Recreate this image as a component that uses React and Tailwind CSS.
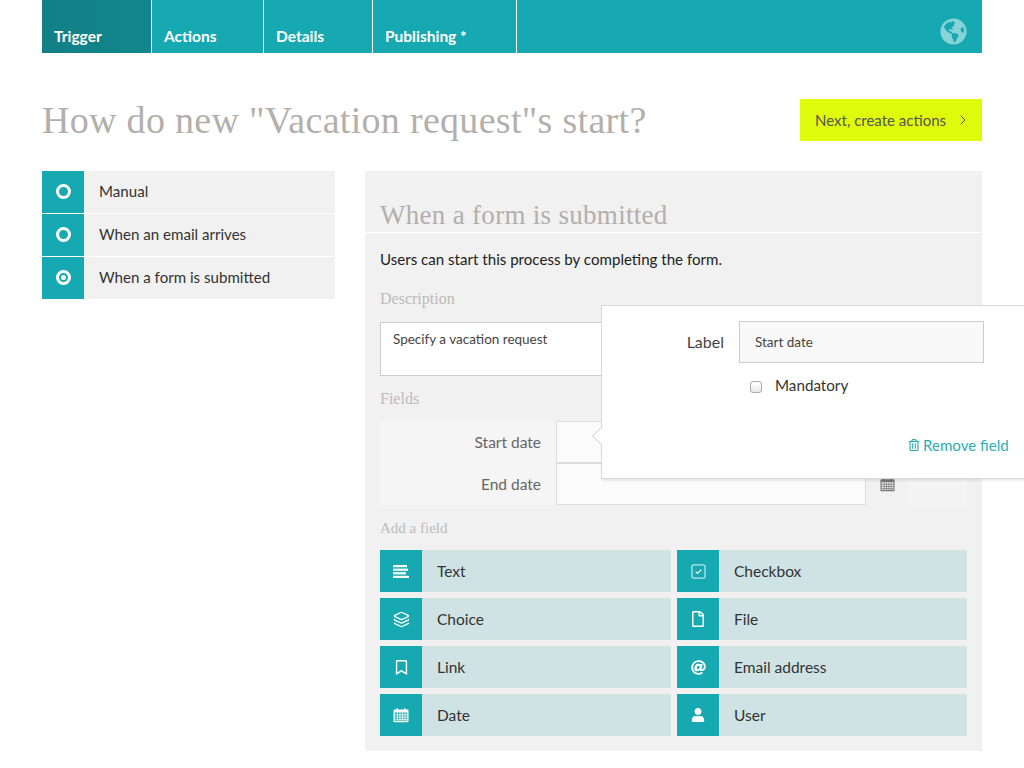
import React from 'react';
import { FaAt, FaGlobeAmericas, FaRegBookmark, FaRegFile, FaRegTrashAlt, FaUser } from 'react-icons/fa';
import { ChevronRight, Layers } from 'lucide-react';

const bodyFont = "font-['Lato',sans-serif]";
const slabFont = "font-['Liberation_Serif',serif]";

const CalendarIcon = ({ className }) => (
  <svg viewBox="0 0 16 16" className={className} fill="currentColor">
    <path d="M1.500 2.500h2V1.200h1.500v1.300h6V1.200h1.500v1.300h2a1 1 0 0 1 1 1v10.800a1 1 0 0 1-1 1h-13a1 1 0 0 1-1-1V3.500a1 1 0 0 1 1-1z" />
    <path d="M1.800 5.500h12.400v8.300H1.800z" fill="var(--cal-bg)" />
    <path d="M2 7.800h12M2 10.100h12M2 12.400h12M4.500 5.500v8.300M7 5.500v8.300M9.500 5.500v8.300M12 5.500v8.300" stroke="currentColor" strokeWidth="0.8" fill="none" />
  </svg>
);

const CheckIcon = () => (
  <svg viewBox="0 0 16 16" className="h-[15px] w-[15px]" fill="none" stroke="#fff">
    <rect x="1" y="1" width="14" height="14" rx="2" strokeWidth="1.400" strokeOpacity="0.7" />
    <path d="M5 8.200l2 1.800 4-4" strokeWidth="1.300" />
  </svg>
);

const AlignIcon = () => (
  <svg viewBox="0 0 16 13" className="h-[13px] w-[16px]" fill="#fff">
    <rect width="14" height="2.200" />
    <rect y="3.600" width="15" height="2.200" />
    <rect y="7.200" width="13" height="2.200" />
    <rect y="10.800" width="16" height="2.200" />
  </svg>
);

const tabs = [
  { label: 'Trigger', width: 'w-[110px]', active: true },
  { label: 'Actions', width: 'w-[112px]' },
  { label: 'Details', width: 'w-[109px]' },
  { label: 'Publishing *', width: 'w-[144px]' },
];

const triggers = [
  { label: 'Manual' },
  { label: 'When an email arrives' },
  { label: 'When a form is submitted', selected: true },
];

const leftFields = [
  { label: 'Text', icon: <AlignIcon /> },
  { label: 'Choice', icon: <Layers className="h-[17px] w-[17px]" strokeWidth={1.800} /> },
  { label: 'Link', icon: <FaRegBookmark className="h-[15px] w-[15px]" /> },
  { label: 'Date', icon: <span className="[--cal-bg:#17a9b1]"><CalendarIcon className="h-[16px] w-[16px]" /></span> },
];

const rightFields = [
  { label: 'Checkbox', icon: <CheckIcon /> },
  { label: 'File', icon: <FaRegFile className="h-[16px] w-[16px]" /> },
  { label: 'Email address', icon: <FaAt className="h-[15px] w-[15px]" /> },
  { label: 'User', icon: <FaUser className="h-[14px] w-[14px]" /> },
];

const FieldButton = ({ label, icon }) => (
  <div className="flex h-[42px] items-center bg-[#cfe3e4]">
    <div className="flex h-full w-[42px] shrink-0 items-center justify-center bg-[#17a9b1] text-white">{icon}</div>
    <span className="pl-[15px] pt-[2px] text-[15.500px] text-[#333]">{label}</span>
  </div>
);

const FieldRow = ({ label }) => (
  <div className="flex h-[42px]">
    <div className="flex w-[176px] items-center justify-end bg-[#f5f5f5] pr-[15px] pt-[2px] text-[15.500px] text-[#666]">{label}</div>
    <input className="h-full w-[310px] border border-[#dcdcdc] bg-[#fbfbfb] outline-none" />
    <div className="flex w-[42px] items-center justify-center text-[#777] [--cal-bg:#f1f1f1]">
      <CalendarIcon className="h-[15px] w-[15px]" />
    </div>
    <div className="w-[59px] bg-[#f4f4f4]" />
  </div>
);

export default function App() {
  return (
    <div className={`relative h-[768px] overflow-hidden bg-white ${bodyFont}`}>
      <div className="mx-[42px] w-[940px]">
        <nav className="flex h-[53px] bg-[#17a9b1]">
          {tabs.map((tab) => (
            <div
              key={tab.label}
              className={`flex ${tab.width} items-end border-r border-white pb-[5px] pl-[12px] text-[15.500px] font-bold text-white ${
                tab.active ? 'bg-gradient-to-r from-[#137f86] to-[#12868d]' : ''
              }`}
            >
              {tab.label}
            </div>
          ))}
          <div className="flex flex-1 items-center justify-end pr-[15px] pt-[10px]">
            <FaGlobeAmericas className="h-[27px] w-[27px] text-[#88d3d6]" />
          </div>
        </nav>

        <header className="mt-[46px] flex h-[42px] items-center justify-between">
          <h1 className={`${slabFont} text-[38px] tracking-[0.3px] text-[#b3afac]`}>How do new "Vacation request"s start?</h1>
          <button className="flex h-full w-[182px] items-center justify-between bg-[#e0fa0b] pl-[15px] pr-[11px] text-[15px] text-[#555]">
            Next, create actions
            <ChevronRight className="h-[16px] w-[16px]" strokeWidth={1.500} />
          </button>
        </header>

        <div className="mt-[30px] flex items-start justify-between">
          <div className="flex w-[293px] flex-col gap-px">
            {triggers.map((item) => (
              <div key={item.label} className="flex h-[42px] items-center bg-[#f1f1f1]">
                <div className="flex h-full w-[42px] items-center justify-center bg-[#17a9b1] pb-[2px]">
                  <span className="flex h-[15px] w-[15px] items-center justify-center rounded-full border-[3px] border-white">
                    {item.selected && <span className="h-[5px] w-[5px] rounded-full bg-white" />}
                  </span>
                </div>
                <span className="pb-[2px] pl-[15px] text-[15.100px] text-[#333]">{item.label}</span>
              </div>
            ))}
          </div>

          <main className="h-[580px] w-[617px] bg-[#f1f1f1]">
            <div className="flex h-[62px] items-end border-b border-white pb-px pl-[15px]">
              <h2 className={`${slabFont} text-[27px] leading-[32px] tracking-[0.3px] text-[#b3afac]`}>When a form is submitted</h2>
            </div>
            <div className="px-[15px]">
              <p className="mt-[15px] text-[15.100px] leading-[22px] text-[#222]">Users can start this process by completing the form.</p>
              <div className={`${slabFont} mt-[18px] text-[16px] leading-[22px] text-[#bbb]`}>Description</div>
              <textarea
                readOnly
                defaultValue="Specify a vacation request"
                className="mt-[12px] block h-[54px] w-full resize-none border border-[#ccc] bg-white px-[12px] py-[6px] text-[13.500px] leading-[20px] text-[#444] outline-none"
              />
              <div className={`${slabFont} mt-[12px] text-[16px] leading-[22px] text-[#bbb]`}>Fields</div>
              <div className="mt-[11px] flex flex-col">
                <FieldRow label="Start date" />
                <FieldRow label="End date" />
              </div>
              <div className={`${slabFont} mt-[12px] text-[15px] leading-[22px] text-[#bbb]`}>Add a field</div>
              <div className="mt-[11px] grid grid-cols-[291px_290px] gap-x-[6px] gap-y-[6px]">
                {leftFields.map((field, i) => (
                  <React.Fragment key={field.label}>
                    <FieldButton {...field} />
                    <FieldButton {...rightFields[i]} />
                  </React.Fragment>
                ))}
              </div>
            </div>
          </main>
        </div>
      </div>

      <div className="absolute left-[601px] top-[305px] h-[174px] w-[440px] border border-[#d8d8d8] bg-white shadow-[1px_2px_2px_rgba(0,0,0,0.08)]">
        <span className="absolute left-[-7px] top-[123px] h-[14px] w-[14px] rotate-45 border-b border-l border-[#d8d8d8] bg-white" />
        <div className="absolute right-[316px] top-[25px] text-[16px] leading-[22px] text-[#444]">Label</div>
        <input
          readOnly
          value="Start date"
          className="absolute left-[137px] top-[15px] h-[42px] w-[245px] border border-[#ccc] bg-[#f9f9f9] px-[15px] text-[13.500px] text-[#444] outline-none"
        />
        <input
          type="checkbox"
          className="absolute left-[148px] top-[75px] h-[12px] w-[12px] appearance-none rounded-[3px] border border-[#aaa] bg-gradient-to-b from-white to-[#e8e8e8]"
        />
        <span className="absolute left-[173px] top-[68px] text-[15.200px] leading-[22px] text-[#333]">Mandatory</span>
        <div className="absolute left-[306px] top-[128px] flex items-center gap-[3px] text-[15.100px] leading-[22px] text-[#2aafb6]">
          <FaRegTrashAlt className="h-[12px] w-[12px]" />
          Remove field
        </div>
      </div>
    </div>
  );
}
